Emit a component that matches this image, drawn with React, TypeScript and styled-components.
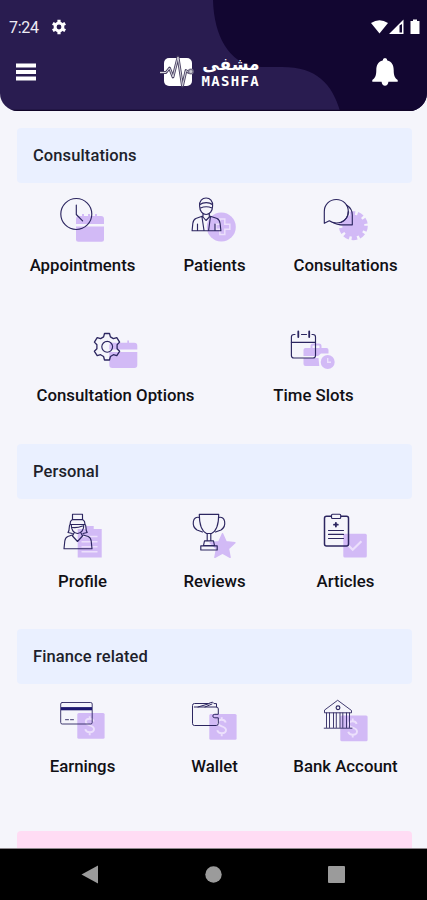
import React from "react";
import styled, { createGlobalStyle } from "styled-components";

const GlobalStyle = createGlobalStyle`
  * { box-sizing: border-box; }
  body { margin: 0; background: #f5f5fb; font-family: Roboto, "Liberation Sans", sans-serif; }
`;

const Screen = styled.div`
  width: 427px;
  height: 900px;
  display: flex;
  flex-direction: column;
  overflow: hidden;
  background: #f5f5fb;
`;

const Header = styled.header`
  position: relative;
  flex: none;
  height: 111px;
  overflow: hidden;
  border-radius: 0 0 18px 18px;
  background: #291c50;
  color: #fff;
`;

const HeaderShape = styled.svg`
  position: absolute;
  inset: 0;
`;

const StatusBar = styled.div`
  position: relative;
  display: flex;
  align-items: center;
  height: 28px;
  margin-top: 13px;
  padding: 0 6px 0 9px;
`;

const Clock = styled.span`
  width: 42px;
  font-size: 16px;
  letter-spacing: -0.3px;
  color: #eeecf4;
`;

const StatusIcons = styled.svg`
  margin-left: auto;
`;

const AppBar = styled.div`
  position: relative;
  display: flex;
  align-items: center;
  justify-content: space-between;
  height: 62px;
  padding: 0 29px 0 16px;
`;

const Brand = styled.div`
  display: flex;
  align-items: center;
  gap: 7px;
  margin-left: 11px;
`;

const BrandText = styled.div`
  display: flex;
  flex-direction: column;
  width: 58px;
  height: 34px;
`;

const ArabicName = styled.span`
  height: 18px;
  font: bold 17px/18px "DejaVu Sans", sans-serif;
  text-align: right;
  white-space: nowrap;
`;

const LatinName = styled.span`
  height: 16px;
  font: bold 14px/16px "DejaVu Sans Mono", monospace;
  letter-spacing: 1.3px;
  white-space: nowrap;
`;

const Content = styled.main`
  flex: 1;
  min-height: 0;
  overflow: hidden;
  padding: 17px 15px 0 17px;
`;

const Section = styled.section<{ $extra?: number }>`
  padding-bottom: ${(p) => p.$extra ?? 0}px;
`;

const SectionTitle = styled.h2`
  display: flex;
  align-items: center;
  height: 55px;
  margin: 0;
  padding: 0 16px;
  border-radius: 4px;
  background: #eaf0ff;
  color: #211f2b;
  font-size: 16.5px;
  font-weight: 500;
  letter-spacing: 0.1px;
`;

const ItemRow = styled.div<{ $columns: string }>`
  display: grid;
  grid-template-columns: ${(p) => p.$columns};
  height: 130px;
  margin: 0 -1px;
`;

const Item = styled.div`
  display: flex;
  flex-direction: column;
  align-items: center;
  padding-top: 7px;
`;

const ItemLabel = styled.span`
  position: relative;
  margin-top: 9px;
  padding-left: 1px;
  color: #111015;
  font-size: 16.8px;
  line-height: 21px;
  font-weight: 500;
  white-space: nowrap;
`;

const Promo = styled.div`
  height: 55px;
  margin-top: 17px;
  border-radius: 4px;
  background: #ffdcf4;
`;

const NavBar = styled.nav`
  flex: none;
  display: flex;
  align-items: center;
  justify-content: space-between;
  height: 52px;
  padding: 0 82px 0 81px;
  border-top: 1px solid #8d888c;
  background: #000;
`;

const INK = "#2c2660";
const LILAC = "#d2baf6";
const PALE = "#ece0fc";

const star = (cx: number, cy: number, outer: number, inner: number, n: number) =>
  Array.from({ length: n * 2 }, (_, i) => {
    const r = i % 2 ? inner : outer;
    const a = (Math.PI * i) / n - Math.PI / 2;
    return `${(cx + r * Math.cos(a)).toFixed(1)},${(cy + r * Math.sin(a)).toFixed(1)}`;
  }).join(" ");

const Icon = ({ back, children }: { back: React.ReactNode; children: React.ReactNode }) => (
  <svg width="64" height="56" viewBox="0 0 64 56" fill="none">
    {back}
    <g stroke={INK} strokeWidth="1.15" strokeLinecap="round" strokeLinejoin="round">
      {children}
    </g>
  </svg>
);

const MoneyBox = ({ y }: { y: number }) => (
  <g transform={`translate(27.3 ${y})`}>
    <rect width="27.3" height="25.8" rx="1.5" fill={LILAC} />
    <path
      d="M16.4 8.5C15.8 6.6 14.2 5.8 12.3 5.8c-2.2 0-3.8 1.2-3.8 3 0 4.5 8.2 2.5 8.2 7.3 0 2.1-1.8 3.2-4.2 3.2-2.3 0-4-1-4.600-3M12.400 3.200v2.400M12.400 19.400v2.800"
      stroke={PALE}
      strokeWidth="1.9"
    />
  </g>
);

const icons: Record<string, React.ReactNode> = {
  Appointments: (
    <Icon
      back={
        <g fill={LILAC}>
          <path d="M26 34V29q0-3 3-3h3v-2h2v2h4v-2h2v2h5v-2h2v2h4q3 0 3 3v5z" />
          <path d="M26 36.5h28v12.8q0 2.5-2.5 2.5h-23q-2.5 0-2.5-2.5z" />
        </g>
      }
    >
      <circle cx="26.3" cy="24" r="15.5" />
      <path d="M26.3 15v9.5l6.3 6.3" />
    </Icon>
  ),
  Patients: (
    <Icon
      back={
        <g>
          <circle cx="39.3" cy="37" r="14.5" fill={LILAC} />
          <path d="M37.8 29h5v5.2h5v5h-5v5.2h-5v-5.2h-4v-5h4z" stroke={PALE} strokeWidth="1.5" />
        </g>
      }
    >
      <path d="M17.6 16c-.4-5 2.5-8 6.5-8s6.900 3 6.500 8c0 5-3 8.500-6.500 8.500S17.600 21 17.600 16zM18 14.500c3-2.500 9.500-2.500 12.300 0M18.500 18c3.500-1.500 8-1.500 11.500 0" />
      <path d="M21 23.500v3.500l3 3.500 3.300-3.500v-3.500M20.800 26l-7 2.500q-2.500 1.200-3 5l-.7 7.200h28.800l-.8-7.200q-.5-3.800-3-5l-7.500-2.500M20 27l2 13.500M28.400 27l-1.800 13.500M15.500 34v6.500M33 34v6.500" />
    </Icon>
  ),
  Consultations: (
    <Icon
      back={
        <g>
          <circle cx="40.3" cy="35.700" r="11" fill={LILAC} />
          <circle cx="40.3" cy="35.700" r="11.500" stroke={LILAC} strokeWidth="6" strokeDasharray="5 2.226" />
        </g>
      }
    >
      <path fill="#f5f5fb" d="M11.300 33.300V21.500c0-7 5.300-12 12-12s12 5 12 12-5.300 11.500-12 11.500q-4.200 0-7-2.200z" />
      <path d="M33.500 15c4 2.500 5.800 5.600 5.800 10v9.800H28q-4 0-7.200-1.700M35.300 21.500c0 4.500-3 9-7.500 11" />
    </Icon>
  ),
  "Consultation Options": (
    <Icon
      back={
        <g fill={LILAC}>
          <path d="M26.300 29.500v-3.800q0-3 3-3h15v-2.200h1.700v2.200h5.300q3 0 3 3v3.800z" />
          <path d="M26.300 32h28v13q0 3-3 3h-22q-3 0-3-3z" />
        </g>
      }
    >
      <path d="M21.500 13.500h5l.9 3.400 3 1.700 3.400-1 2.800 4.500-2.500 2.600v4l2.500 2.600-2.800 4.400-3.400-1-3 1.800-.9 3.500h-5l-.9-3.500-3-1.800-3.400 1-2.800-4.400 2.500-2.600v-4l-2.500-2.600 2.800-4.500 3.400 1 3-1.700z" strokeWidth="1.300" />
      <circle cx="24.200" cy="26.800" r="5.400" />
    </Icon>
  ),
  "Time Slots": (
    <Icon
      back={
        <g>
          <path d="M30.500 29v-3q0-1.500 1.500-1.500h6q1.500 0 1.500 1.500v3" stroke={LILAC} strokeWidth="2" />
          <path d="M24.500 28h21q2 0 2 2v3.500H40l-3 2.500H22.500v-6q0-2 2-2zM22.500 38h15l.8 8H24.500q-2 0-2-2z" fill={LILAC} />
          <circle cx="46.700" cy="42" r="7" fill={LILAC} />
          <path d="M46.700 38v4.200h3.300" stroke={PALE} strokeWidth="1.400" />
        </g>
      }
    >
      <path d="M14 14.500h-1q-2.600 0-2.600 2.500v18.500q0 2.500 2.600 2.500h19q2.500 0 2.500-2.500V17q0-2.500-2.500-2.500h-1M20.500 14.500h5" />
      <path d="M10.400 22.300h24" />
      <path d="M17.300 11.500v5.500M28.200 11.500v5.500" strokeWidth="1.800" />
    </Icon>
  ),
  Profile: (
    <Icon
      back={
        <g>
          <path d="M27.700 23h8v-3h8v3h8v28.500h-24z" fill={LILAC} />
          <path d="M31.500 30.500h16M31.500 35.700h16M31.500 40.700h16M31.500 45.700h16" stroke={PALE} strokeWidth="1.500" />
        </g>
      }
    >
      <path d="M22.500 8.200h10v5.500h-10zM20.500 15.500q1-2 3-2h8q2 0 3 2l.5 3H20zM20.500 18c-2.500 1.500 0 5-2.500 8.500l4.300 1M34.700 18c2.500 1.500 0 5 2.500 8.500l-4.200 1M21.300 18.500c-.2 5 2.300 9 6.200 9s6.500-4 6.300-9M22.500 21.500c3 .3 7.500-.5 10-1.500" />
      <path d="M24 27l-1.500 3 5 5.500 5-5.500-1.500-3M22.300 29l-4.500 1.500q-2.500 1-3 4.500l-.8 7.700h28l-.8-7.700q-.5-3.500-3-4.500l-5-1.500" />
    </Icon>
  ),
  Reviews: (
    <Icon
      back={
        <polygon points={star(40.500, 40.800, 13, 6.200, 5)} fill={LILAC} stroke={LILAC} strokeWidth="1.500" strokeLinejoin="round" />
      }
    >
      <path d="M17.300 8.300h19.400c0 9-1.600 16.500-7.200 19.200h-5C19 24.800 17.300 17.300 17.300 8.300z" />
      <path d="M17.500 11.500c-7-2-8.500 8.500-2.500 12.500l5.500 2M36.500 11.500c7-2 8.500 8.500 2.500 12.500l-5.500 2M25.200 27.500v7M28.800 27.500v7M22.500 34.800h9l1 4.700h-11zM18.800 39.800h16.400v4.200H18.800z" />
    </Icon>
  ),
  Articles: (
    <Icon
      back={
        <g>
          <rect x="30.300" y="27.700" width="23.500" height="23.700" rx="1.500" fill={LILAC} />
          <path d="M35.500 39.500l4.200 4.300 8.700-8.500" stroke={PALE} strokeWidth="2.200" />
        </g>
      }
    >
      <rect x="11.500" y="10.300" width="24" height="29.800" rx="2" strokeWidth="1.500" />
      <rect x="18.500" y="8.200" width="9.200" height="4.300" rx="1" fill="#f5f5fb" />
      <path d="M22.900 16.800v3.800M21 18.700h3.800" strokeWidth="1.800" />
      <path d="M15.500 24.500h15M15.500 28.400h15M15.500 32.500h15" />
    </Icon>
  ),
  Earnings: (
    <Icon back={<MoneyBox y={22} />}>
      <rect x="10.700" y="11.500" width="31.500" height="21.500" rx="1.500" strokeWidth="0.900" />
      <path d="M11 17.700h31" stroke="#1f1970" strokeWidth="3.200" strokeLinecap="butt" />
      <path d="M15.500 28.700h3M20.500 28.700h3" strokeWidth="0.900" />
    </Icon>
  ),
  Wallet: (
    <Icon back={<MoneyBox y={23} />}>
      <path strokeWidth="1" d="M12.300 16h22q2 0 2 2v5.300h-3.500q-2 0-2 1.700t2 1.800h3.500v5.500q0 2.200-2 2.200h-22q-1.800 0-1.800-2.200V14.500q0-2 2-2h14l4-1.400 1.500 1.500h2.500V16M16 16l11-3.300M23 16l7-3" />
    </Icon>
  ),
  "Bank Account": (
    <Icon back={<MoneyBox y={24.400} />}>
      <path strokeWidth="0.900" d="M25 9.500l13.500 10v2.300H11.500v-2.300zM13.500 22v14.500M16.500 22v14.500M20.500 22v14.500M23.300 22v14.500M27 22v14.500M29.800 22v14.500M33.500 22v14.500M36.500 22v14.500M11.200 37.200h27.800" />
      <circle cx="25" cy="16.700" r="1.900" />
    </Icon>
  ),
};

const THREE = "132px 132px 130px";
const TWO = "198px 198px";

const sections = [
  {
    title: "Consultations",
    extra: 1,
    rows: [
      ["Appointments", "Patients", "Consultations"],
      ["Consultation Options", "Time Slots"],
    ],
  },
  { title: "Personal", rows: [["Profile", "Reviews", "Articles"]] },
  { title: "Finance related", rows: [["Earnings", "Wallet", "Bank Account"]] },
];

const PULSE = "M0 18.500h6l3.500-4.500 3.500 9 5-20 4.500 29 3.500-15.500 2.500 2";

export default function App() {
  return (
    <Screen>
      <GlobalStyle />
      <Header>
        <HeaderShape width="427" height="111" viewBox="0 0 427 111">
          <path d="M213 0c1 38 18 67 49 67h20c35 0 50 17 58 44h87V0z" fill="#120631" />
          <path d="M0 110.500h427" stroke="#100427" strokeWidth="1.500" />
        </HeaderShape>
        <StatusBar>
          <Clock>7:24</Clock>
          <svg width="16" height="16" viewBox="0 0 16 16" fill="none">
            <circle cx="8" cy="8" r="3.900" stroke="#fff" strokeWidth="3" />
            <path
              d="M8 .8v2.700M8 12.500v2.700M1.800 4.400l2.300 1.300M11.900 10.300l2.300 1.300M14.200 4.400l-2.300 1.300M4.100 10.300l-2.300 1.300"
              stroke="#fff"
              strokeWidth="3.200"
            />
          </svg>
          <StatusIcons width="50" height="16" viewBox="0 0 50 16" fill="#fff">
            <path d="M0 4Q8.500-1.500 17 4L8.500 14.500z" />
            <path fillRule="evenodd" d="M32.500.5V15H18zM28.500 6.500v7h2.500V5z" />
            <path d="M39.500 2H42V.500h4V2h2.500v13h-9z" />
          </StatusIcons>
        </StatusBar>
        <AppBar>
          <svg width="20" height="18" viewBox="0 0 20 18" fill="#fff">
            <path d="M0 .5h20v4H0zM0 7h20v4H0zM0 13.500h20v4H0z" />
          </svg>
          <Brand>
            <svg width="35" height="36" viewBox="0 0 35 36" fill="none">
              <rect x="4" y="4" width="28" height="28" rx="5" fill="#fff" />
              <g strokeLinejoin="round" strokeLinecap="round">
                <path d={PULSE} stroke="#4a4263" strokeWidth="2.800" />
                <path d={PULSE} stroke="#d6d5de" strokeWidth="1" />
              </g>
              <circle cx="30.800" cy="17.500" r="2.300" stroke="#77718b" strokeWidth="1.400" fill="#c9c8d2" />
            </svg>
            <BrandText>
              <ArabicName lang="ar" dir="rtl">مشفى</ArabicName>
              <LatinName>MASHFA</LatinName>
            </BrandText>
          </Brand>
          <svg width="26" height="28" viewBox="0 0 26 28" fill="#fff">
            <path d="M13 0q2.300 0 2.300 2.500C20 3.600 21.700 7.500 21.700 12c0 6 1.300 8 4 10v1.800H.3V22c2.700-2 4-4 4-10 0-4.500 1.700-8.400 6.400-9.500Q10.700 0 13 0zM9.500 23.500h7q-.7 4.300-3.500 4.300t-3.500-4.300z" />
          </svg>
        </AppBar>
      </Header>
      <Content>
        {sections.map((s) => (
          <Section key={s.title} $extra={s.extra}>
            <SectionTitle>{s.title}</SectionTitle>
            {s.rows.map((row) => (
              <ItemRow key={row[0]} $columns={row.length === 3 ? THREE : TWO}>
                {row.map((name) => (
                  <Item key={name}>
                    {icons[name]}
                    <ItemLabel>{name}</ItemLabel>
                  </Item>
                ))}
              </ItemRow>
            ))}
          </Section>
        ))}
        <Promo />
      </Content>
      <NavBar>
        <svg width="17" height="19" viewBox="0 0 17 19" fill="#9b9b9b">
          <path d="M17 .5v18L.5 9.500z" />
        </svg>
        <svg width="17" height="17" viewBox="0 0 17 17" fill="#9b9b9b">
          <circle cx="8.500" cy="8.500" r="8.200" />
        </svg>
        <svg width="17" height="17" viewBox="0 0 17 17" fill="#9b9b9b">
          <rect width="17" height="17" rx="1" />
        </svg>
      </NavBar>
    </Screen>
  );
}
